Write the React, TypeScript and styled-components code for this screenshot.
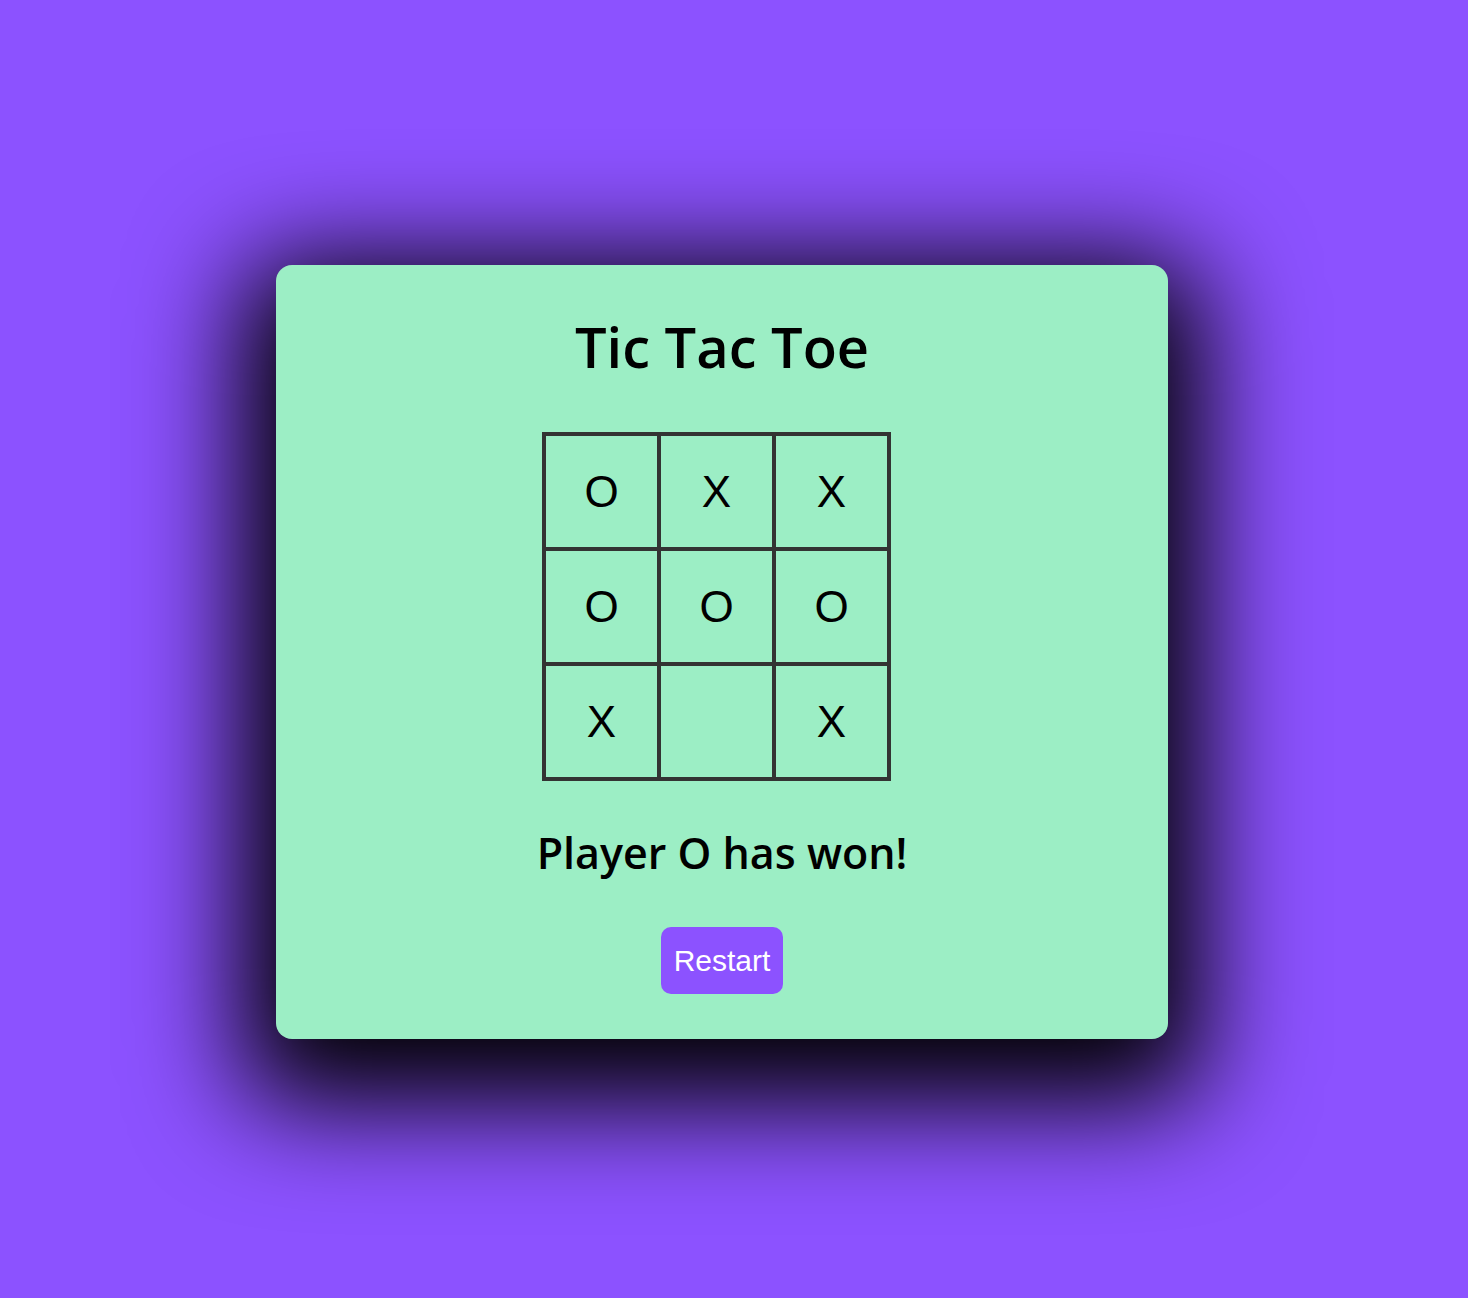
import { useState } from "react";
import styled, { createGlobalStyle } from "styled-components";

const GlobalStyle = createGlobalStyle`
  body {
    margin: 0;
    background-color: #8c52ff;
    font-family: "Open Sans", "Liberation Sans", sans-serif;
  }
`;

const Page = styled.div`
  min-height: 1298px;
  padding: 265px 0 0 276px;
  box-sizing: border-box;
`;

const Card = styled.div`
  width: 892px;
  height: 774px;
  box-sizing: border-box;
  background-color: #9ceec5;
  border-radius: 16px;
  box-shadow: 0 30px 110px 35px #000;
  display: flex;
  flex-direction: column;
  align-items: center;
  padding-top: 45px;
`;

const Title = styled.h1`
  margin: 0;
  font-family: "Open Sans", sans-serif;
  font-weight: 600;
  font-size: 56px;
  line-height: 72px;
  color: #000;
`;

const Board = styled.div`
  margin: 50px 11px 0 0;
  display: grid;
  grid-template-columns: repeat(3, 111px);
  grid-template-rows: repeat(3, 111px);
  gap: 4px;
  padding: 4px;
  background-color: #333333;
`;

const Cell = styled.button`
  border: none;
  padding: 0;
  margin: 0;
  background-color: #9ceec5;
  font-family: "Liberation Sans", Arial, sans-serif;
  font-size: 44px;
  color: #000;
  display: flex;
  align-items: center;
  justify-content: center;
  cursor: pointer;
`;

const Status = styled.h2`
  margin: 44px 0 0;
  font-family: "Open Sans", sans-serif;
  font-weight: 600;
  font-size: 43px;
  line-height: 56px;
  color: #000;
`;

const RestartButton = styled.button`
  margin-top: 46px;
  background-color: #8c52ff;
  color: #fff;
  border: none;
  border-radius: 10px;
  font-family: "Liberation Sans", Arial, sans-serif;
  font-size: 30px;
  line-height: 35px;
  padding: 16px 13px;
  cursor: pointer;
`;

const startBoard = ["O", "X", "X", "O", "O", "O", "X", "", "X"];

const App = () => {
  const [squares, setSquares] = useState<string[]>(startBoard);

  return (
    <Page>
      <GlobalStyle />
      <Card>
        <Title>Tic Tac Toe</Title>
        <Board>
          {squares.map((value, index) => (
            <Cell key={index}>{value}</Cell>
          ))}
        </Board>
        <Status>Player O has won!</Status>
        <RestartButton onClick={() => setSquares(Array(9).fill(""))}>
          Restart
        </RestartButton>
      </Card>
    </Page>
  );
};

export default App;
